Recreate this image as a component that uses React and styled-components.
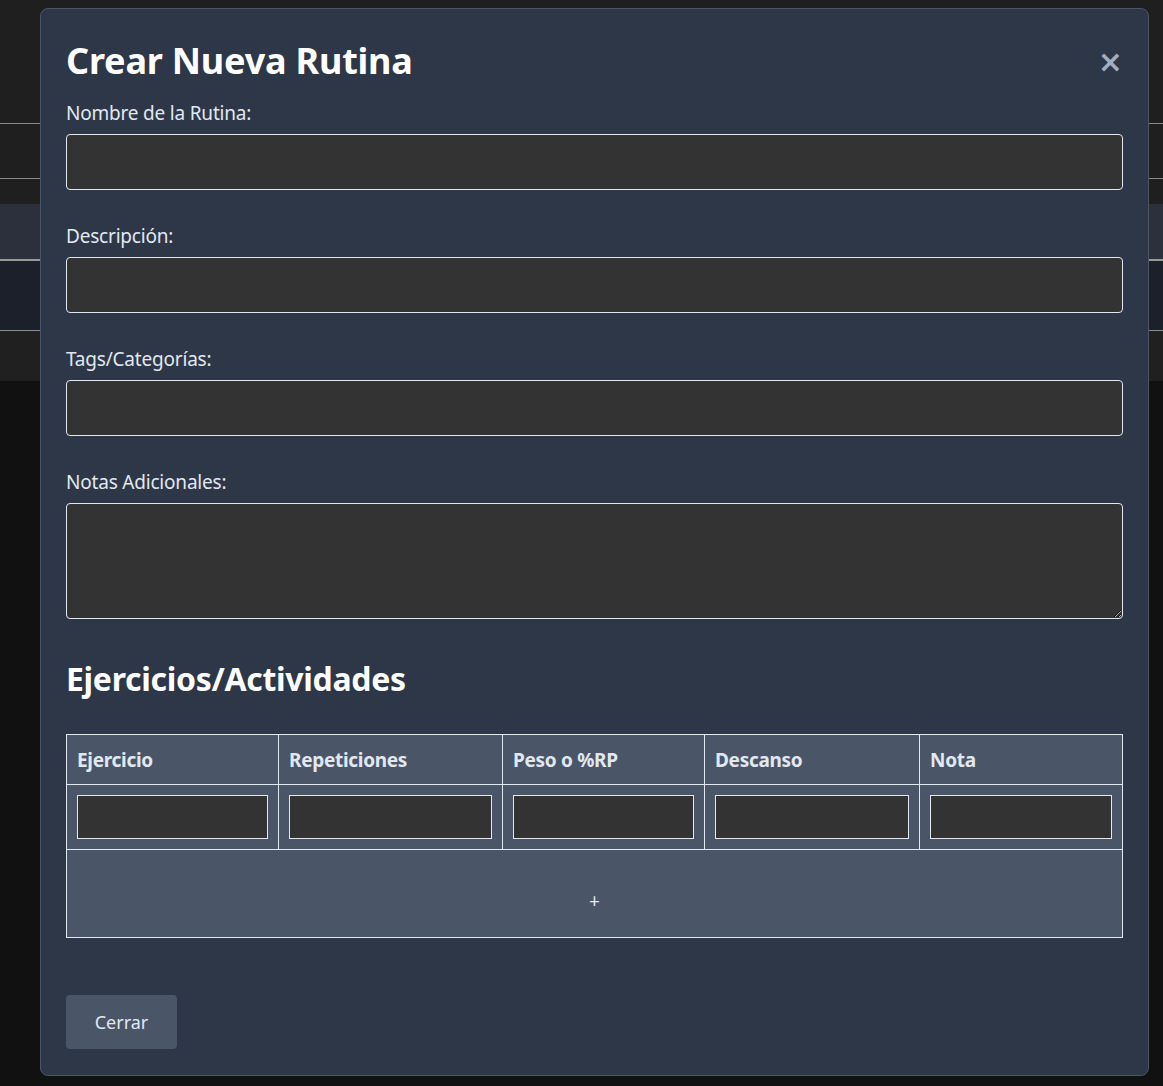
import React from "react";
import styled, { createGlobalStyle } from "styled-components";

const Global = createGlobalStyle`
  html, body { margin: 0; padding: 0; background: #111111; }
  body { font-family: "Noto Sans", "Open Sans", sans-serif; color: #e2e8f0; }
  * { box-sizing: border-box; }
`;

const Page = styled.div`
  display: flex;
  flex-direction: column;
  min-height: 1086px;
  background: #111111;
`;

const TopArea = styled.div`
  height: 123px;
  background: #1f1f1f;
`;

const BgRow = styled.div`
  height: ${(p) => p.$h}px;
  background: ${(p) => p.$bg};
  border-top: ${(p) => p.$line || 0}px solid ${(p) => p.$lineColor || "#8a8a8a"};
`;

const Overlay = styled.div`
  position: fixed;
  inset: 0;
  display: flex;
  align-items: flex-start;
  padding: 8px 14px 0 40px;
`;

const Modal = styled.div`
  width: 1109px;
  height: 1068px;
  background: #2d3748;
  border: 1px solid #4a5568;
  border-radius: 8px;
  padding: 25px;
  display: flex;
  flex-direction: column;
`;

const Header = styled.div`
  display: flex;
  align-items: center;
  justify-content: space-between;
  height: 56px;
`;

const Title = styled.h1`
  margin: -3px 0 0;
  font-size: 36px;
  font-weight: 700;
  color: #ffffff;
  letter-spacing: -0.2px;
`;

const Close = styled.button`
  background: none;
  border: none;
  color: #a0aec0;
  font-size: 30px;
  font-weight: 700;
  padding: 0;
  line-height: 1;
  cursor: pointer;
  font-family: "DejaVu Sans", sans-serif;
`;

const Field = styled.div`
  display: flex;
  flex-direction: column;
  margin-bottom: 23px;
`;

const Label = styled.label`
  font-size: 19px;
  line-height: 26px;
  color: #e2e8f0;
  padding-top: 10px;
  margin-bottom: 8px;
  letter-spacing: -0.2px;
`;

const Input = styled.input`
  height: 56px;
  width: 100%;
  background: #333333;
  border: 1px solid #e2e8f0;
  border-radius: 4px;
  color: #fff;
  font-size: 18px;
  padding: 0 12px;
`;

const TextArea = styled.textarea`
  height: 116px;
  width: 100%;
  background: #333333;
  border: 1px solid #e2e8f0;
  border-radius: 4px;
  color: #fff;
  font-size: 18px;
  padding: 12px;
  resize: vertical;
  display: block;
`;

const SectionTitle = styled.h2`
  margin: 14px 0 0;
  height: 78px;
  font-size: 32px;
  line-height: 46px;
  font-weight: 700;
  color: #ffffff;
  letter-spacing: -0.3px;
`;

const Table = styled.table`
  width: 100%;
  border-collapse: collapse;
  background: #4a5568;
`;

const Th = styled.th`
  border: 1px solid #e2e8f0;
  text-align: left;
  padding: 0 10px;
  height: 50px;
  font-size: 19px;
  font-weight: 700;
  color: #e2e8f0;
  width: ${(p) => p.$w}px;
  letter-spacing: -0.3px;
`;

const Td = styled.td`
  border: 1px solid #e2e8f0;
  padding: 10px;
  height: 65px;
`;

const CellInput = styled.input`
  display: block;
  width: 100%;
  height: 44px;
  background: #333333;
  border: 1px solid #e2e8f0;
  border-radius: 0;
  color: #fff;
  padding: 0 6px;
`;

const AddCell = styled.td`
  border: 1px solid #e2e8f0;
  height: 88px;
  text-align: center;
  padding-top: 16px;
  font-size: 19px;
  color: #e2e8f0;
`;

const Footer = styled.div`
  margin-top: auto;
  display: flex;
`;

const Button = styled.button`
  width: 111px;
  height: 54px;
  margin-bottom: 1px;
  background: #4a5568;
  border: none;
  border-radius: 4px;
  color: #e2e8f0;
  font-family: inherit;
  font-size: 18px;
`;

const columns = [
  ["Ejercicio", 212],
  ["Repeticiones", 224],
  ["Peso o %RP", 202],
  ["Descanso", 215],
  ["Nota", 203],
];

export default function App() {
  return (
    <>
      <Global />
      <Page>
        <TopArea />
        <BgRow $h={55} $bg="#1f1f1f" $line={1} />
        <BgRow $h={26} $bg="#1f1f1f" $line={1} />
        <BgRow $h={55} $bg="#2b303c" />
        <BgRow $h={71} $bg="#1b202b" $line={2} $lineColor="#9a9a9a" />
        <BgRow $h={51} $bg="#202020" $line={1} />
      </Page>
      <Overlay>
        <Modal>
          <Header>
            <Title>Crear Nueva Rutina</Title>
            <Close aria-label="Cerrar">×</Close>
          </Header>
          <Field>
            <Label>Nombre de la Rutina:</Label>
            <Input type="text" />
          </Field>
          <Field>
            <Label>Descripción:</Label>
            <Input type="text" />
          </Field>
          <Field>
            <Label>Tags/Categorías:</Label>
            <Input type="text" />
          </Field>
          <Field>
            <Label>Notas Adicionales:</Label>
            <TextArea />
          </Field>
          <SectionTitle>Ejercicios/Actividades</SectionTitle>
          <Table>
            <thead>
              <tr>
                {columns.map(([c, w]) => (
                  <Th key={c} $w={w}>{c}</Th>
                ))}
              </tr>
            </thead>
            <tbody>
              <tr>
                {columns.map(([c]) => (
                  <Td key={c}><CellInput type="text" /></Td>
                ))}
              </tr>
              <tr>
                <AddCell colSpan={5}>+</AddCell>
              </tr>
            </tbody>
          </Table>
          <Footer>
            <Button>Cerrar</Button>
          </Footer>
        </Modal>
      </Overlay>
    </>
  );
}
